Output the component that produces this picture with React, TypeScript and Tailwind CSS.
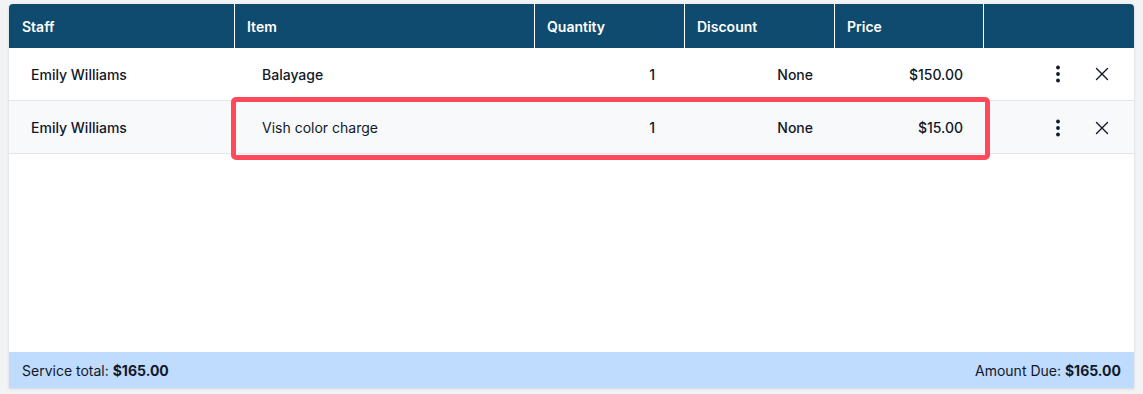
import React from 'react'

type Line = {
  staff: string
  item: string
  qty: number
  discount: string
  price: string
}

const lines: Line[] = [
  { staff: 'Emily Williams', item: 'Balayage', qty: 1, discount: 'None', price: '$150.00' },
  { staff: 'Emily Williams', item: 'Vish color charge', qty: 1, discount: 'None', price: '$15.00' },
]

const cols = 'grid grid-cols-[226px_300px_150px_150px_149px_1fr]'

const Kebab = () => (
  <svg width="6" height="18" viewBox="0 0 6 18" fill="#111827">
    <circle cx="3" cy="2.5" r="1.9" />
    <circle cx="3" cy="9" r="1.9" />
    <circle cx="3" cy="15.5" r="1.9" />
  </svg>
)

const Close = () => (
  <svg width="14" height="14" viewBox="0 0 14 14" stroke="#111827" strokeWidth="1.4" strokeLinecap="round">
    <path d="M1.5 1.5l11 11M12.5 1.5l-11 11" />
  </svg>
)

export default function App() {
  return (
    <div className="min-h-[394px] bg-[#f2f3f5] pt-[4px] px-[9px] font-['Inter',_'Noto_Sans',_sans-serif]">
      <div className="relative flex flex-col h-[384px] bg-white rounded-t-[4px] shadow-[0_1px_3px_rgba(0,0,0,0.12)]">
        {/* header */}
        <div className={`${cols} h-[44px] bg-[#0e4b6e] text-white text-[14px] font-semibold rounded-t-[4px]`}>
          <div className="flex items-center pl-[13px] border-r border-white">Staff</div>
          <div className="flex items-center pl-[12px] border-r border-white">Item</div>
          <div className="flex items-center pl-[12px] border-r border-white">Quantity</div>
          <div className="flex items-center pl-[12px] border-r border-white">Discount</div>
          <div className="flex items-center pl-[12px] border-r border-white">Price</div>
          <div />
        </div>

        {/* line items */}
        {lines.map((l, i) => (
          <div
            key={i}
            className={`${cols} ${i === 0 ? 'h-[53px] bg-white' : 'h-[53px] pt-[1px] bg-[#f8f9fb]'} border-b border-[#e4e6ea] text-[14px] text-[#111827]`}
          >
            <div className="flex items-center pl-[22px] font-medium">{l.staff}</div>
            <div className={`flex items-center pl-[27px] ${i === 0 ? 'font-medium' : 'font-normal'}`}>{l.item}</div>
            <div className="flex items-center justify-end pr-[30px] font-medium">{l.qty}</div>
            <div className="flex items-center justify-end pr-[22px] font-medium">{l.discount}</div>
            <div className="flex items-center justify-end pr-[21px] font-medium">{l.price}</div>
            <div className="flex items-center">
              <span className="ml-[71px] flex w-[6px] justify-center"><Kebab /></span>
              <span className="ml-[34px]"><Close /></span>
            </div>
          </div>
        ))}

        <div className="flex-1" />

        {/* totals */}
        <div className="flex h-[36px] items-center justify-between bg-[#bfdbfd] px-[13px] text-[14px] text-[#111827]">
          <span>
            Service total: <span className="font-bold">$165.00</span>
          </span>
          <span>
            Amount Due: <span className="font-bold">$165.00</span>
          </span>
        </div>

        {/* highlight on the selected line */}
        <div className="absolute left-[222px] top-[93px] h-[63px] w-[759px] rounded-[5px] border-[5px] border-[#ff4a5b]" />
      </div>
    </div>
  )
}
